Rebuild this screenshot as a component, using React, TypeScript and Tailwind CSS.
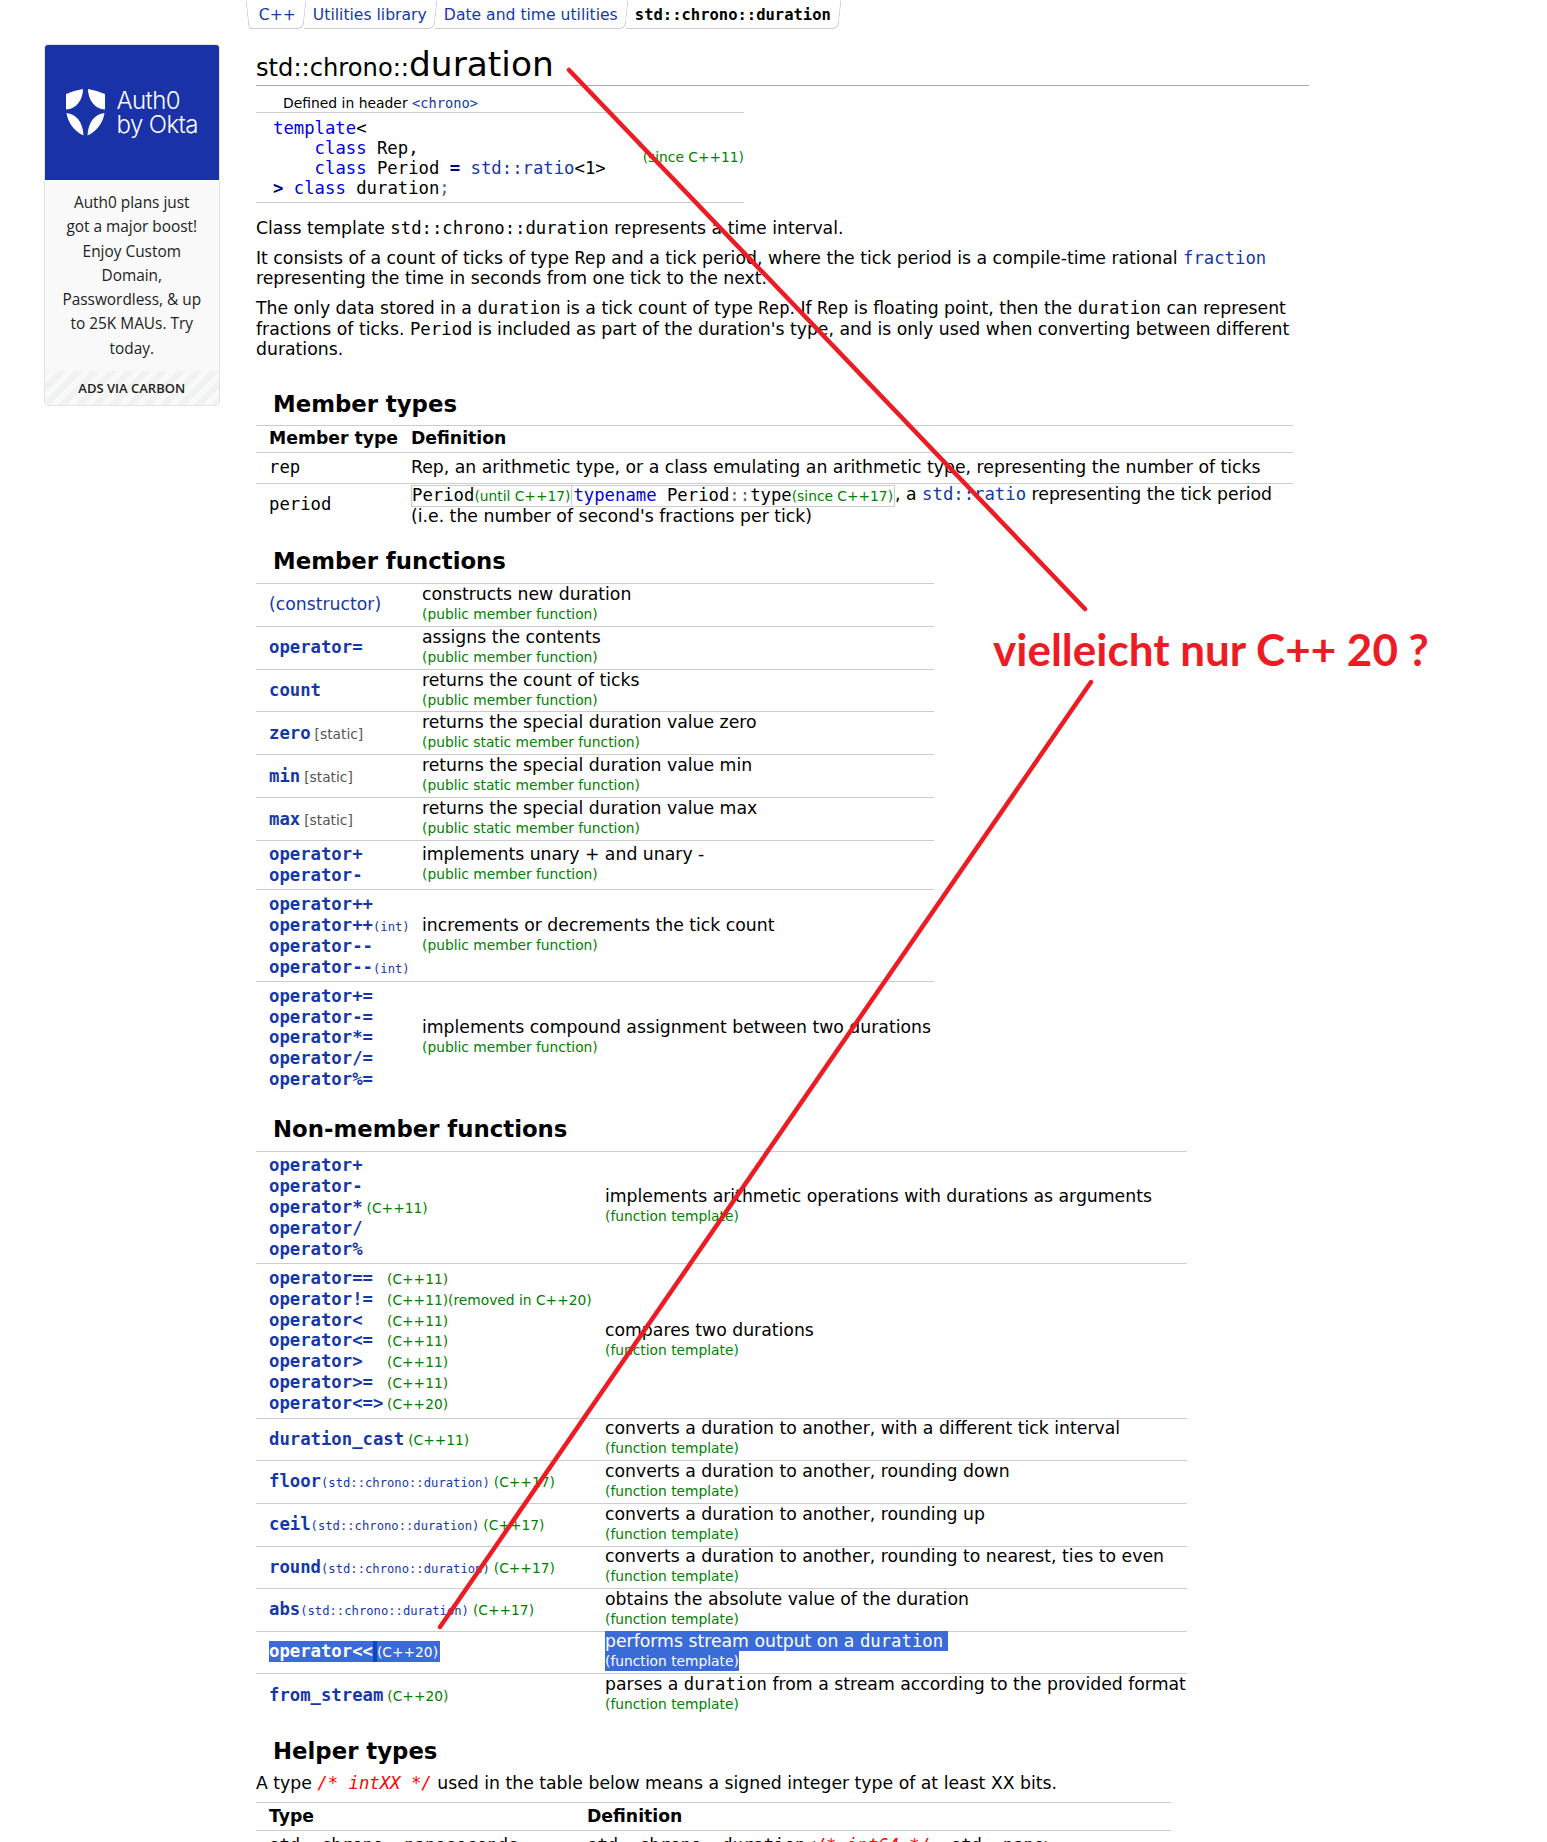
const dv = '"DejaVu Sans", sans-serif';

type Fn = { name: string; note?: string; ver?: string };

const Mono = ({ children, className = '' }: { children: React.ReactNode; className?: string }) => (
  <span className={`font-['DejaVu_Sans_Mono',monospace] ${className}`}>{children}</span>
);

const Desc = ({ text, kind }: { text: React.ReactNode; kind: string }) => (
  <div className="leading-[20px] pb-[2px]">
    <div className="text-black whitespace-nowrap">{text}</div>
    <div className="text-[13.8px] text-[#008000] leading-[20px]">({kind})</div>
  </div>
);

const FnName = ({ name, note, ver }: Fn) => (
  <div className="h-[20.9px] leading-[20.9px] whitespace-nowrap flex items-baseline">
    <Mono className="font-bold text-[#1538a8]">{name}</Mono>
    {note && <Mono className="text-[12.2px] text-[#1538a8]">{note}</Mono>}
    {ver && <span className="ml-[4px] text-[13.8px] text-[#008000]">{ver}</span>}
  </div>
);

const Row = ({ h, cols, names, desc }: { h: string; cols: string; names: React.ReactNode; desc: React.ReactNode }) => (
  <div className={`flex items-center border-b border-[#cccccc] ${h}`}>
    <div className={`${cols} pl-[13px] shrink-0`}>{names}</div>
    <div>{desc}</div>
  </div>
);

const Heading = ({ children, className = '' }: { children: React.ReactNode; className?: string }) => (
  <h3 className={`pl-[17px] text-[22.8px] font-bold text-black leading-[30px] ${className}`}>{children}</h3>
);

const memberRows: { h: string; names: Fn[]; text: string; kind: string }[] = [
  { h: 'h-[43px]', names: [{ name: 'operator=' }], text: 'assigns the contents', kind: 'public member function' },
  { h: 'h-[42.5px]', names: [{ name: 'count' }], text: 'returns the count of ticks', kind: 'public member function' },
  { h: 'h-[43px]', names: [{ name: 'zero', ver: '[static]' }], text: 'returns the special duration value zero', kind: 'public static member function' },
  { h: 'h-[43px]', names: [{ name: 'min', ver: '[static]' }], text: 'returns the special duration value min', kind: 'public static member function' },
  { h: 'h-[42.5px]', names: [{ name: 'max', ver: '[static]' }], text: 'returns the special duration value max', kind: 'public static member function' },
  { h: 'h-[49.5px]', names: [{ name: 'operator+' }, { name: 'operator-' }], text: 'implements unary + and unary -', kind: 'public member function' },
  { h: 'h-[92px]', names: [{ name: 'operator++' }, { name: 'operator++', note: '(int)' }, { name: 'operator--' }, { name: 'operator--', note: '(int)' }], text: 'increments or decrements the tick count', kind: 'public member function' },
];

const compareRows: { name: string; ver: string }[] = [
  { name: 'operator==', ver: '(C++11)' },
  { name: 'operator!=', ver: '(C++11)(removed in C++20)' },
  { name: 'operator<', ver: '(C++11)' },
  { name: 'operator<=', ver: '(C++11)' },
  { name: 'operator>', ver: '(C++11)' },
  { name: 'operator>=', ver: '(C++11)' },
  { name: 'operator<=>', ver: '(C++20)' },
];

const nonMemberRows: { fn: Fn; text: string; h: string }[] = [
  { fn: { name: 'duration_cast', ver: '(C++11)' }, text: 'converts a duration to another, with a different tick interval', h: 'h-[42px]' },
  { fn: { name: 'floor', note: '(std::chrono::duration)', ver: '(C++17)' }, text: 'converts a duration to another, rounding down', h: 'h-[43px]' },
  { fn: { name: 'ceil', note: '(std::chrono::duration)', ver: '(C++17)' }, text: 'converts a duration to another, rounding up', h: 'h-[43px]' },
  { fn: { name: 'round', note: '(std::chrono::duration)', ver: '(C++17)' }, text: 'converts a duration to another, rounding to nearest, ties to even', h: 'h-[42px]' },
  { fn: { name: 'abs', note: '(std::chrono::duration)', ver: '(C++17)' }, text: 'obtains the absolute value of the duration', h: 'h-[43px]' },
];

const Crumb = ({ children, current }: { children: React.ReactNode; current?: boolean }) => (
  <div className={`h-[29px] px-[8px] pt-[3px] flex items-center border-r border-b border-[#cccccc] rounded-br-[6px] -skew-x-6 ${current ? 'text-black font-bold' : 'text-[#1538a8]'}`}>
    <span className="skew-x-6 block">{children}</span>
  </div>
);

const AdCard = () => (
  <aside className="mt-[44px] ml-[43.5px] w-[176.5px] h-[362px] shrink-0 rounded-[4px] border border-[#e3e3e3] overflow-hidden flex flex-col bg-[#f9f9f9]">
    <div className="h-[135px] bg-[#1a32a8] flex items-center pl-[21px] gap-[12px] text-white">
      <svg width="39" height="47" viewBox="0 0 39 47" fill="white" className="shrink-0">
        <path d="M0 5 Q8 1.5 17 0 C17 10 11 20 0 20.5 Z" />
        <path d="M39 5 Q31 1.5 22 0 C22 10 28 20 39 20.5 Z" />
        <path d="M0.5 24 C10 25 17 33 17.5 46.5 C8 42 2 34 0.5 24 Z" />
        <path d="M38.5 24 C29 25 22 33 21.5 46.5 C31 42 37 34 38.5 24 Z" />
      </svg>
      <div className="font-['Inter',sans-serif] font-light text-[24px] leading-[24px] tracking-[-0.6px] whitespace-nowrap">Auth0<br />by Okta</div>
    </div>
    <div className="flex-1 px-[17px] pt-[11px] text-center font-['Open_Sans',sans-serif] text-[15.4px] leading-[24.3px] text-[#222222]">
      Auth0 plans just got a major boost! Enjoy Custom Domain, Passwordless, &amp; up to 25K MAUs. Try today.
    </div>
    <div className="h-[34px] pt-[2px] flex items-center justify-center font-['Open_Sans',sans-serif] text-[13px] font-semibold text-[#222222] bg-[repeating-linear-gradient(-45deg,#f1f2f2,#f1f2f2_6px,#f9f9f9_6px,#f9f9f9_12px)]">
      ADS VIA CARBON
    </div>
  </aside>
);

export default function App() {
  return (
    <div className="relative w-[1547px] h-[1842px] overflow-hidden bg-white flex items-start" style={{ fontFamily: dv }}>
      <AdCard />
      <main className="ml-[36px] w-[1053px] shrink-0 text-[17.27px] text-black">
        <nav className="flex -ml-[9px] h-[29px] text-[15.6px] w-fit">
          <div className="w-[4px] h-[29px] border-l border-b border-[#cccccc] rounded-bl-[6px] skew-x-6"></div>
          <Crumb>C++</Crumb>
          <Crumb>Utilities library</Crumb>
          <Crumb>Date and time utilities</Crumb>
          <Crumb current><Mono className="text-[15.5px]">std::chrono::duration</Mono></Crumb>
        </nav>

        <h1 className="mt-[12px] h-[45px] border-b border-[#aaaaaa] text-[24.2px] leading-[46px] whitespace-nowrap">
          std::chrono::<span className="text-[34.4px]">duration</span>
        </h1>

        <div className="mt-[9px] w-[488px] text-[13.9px]">
          <div className="pl-[27px] h-[17px] leading-[17px] border-b border-[#cccccc] box-content">
            Defined in header <Mono className="text-[#1538a8] text-[13.7px]">&lt;chrono&gt;</Mono>
          </div>
          <div className="relative h-[90px] border-b border-[#cccccc] flex items-center">
            <pre className="pl-[17px] font-['DejaVu_Sans_Mono',monospace] text-[17.27px] leading-[20px] text-black">
              <span className="text-[#0000dd]">template</span>&lt;{'\n'}
              {'    '}<span className="text-[#0000dd]">class</span> Rep,{'\n'}
              {'    '}<span className="text-[#0000dd]">class</span> Period <b className="text-[#000080]">=</b> <span className="text-[#1538a8]">std::ratio</span>&lt;1&gt;{'\n'}
              <b className="text-[#000080]">&gt;</b> <span className="text-[#0000dd]">class</span> duration<span className="text-[#666666]">;</span>
            </pre>
            <span className="ml-auto text-[13.8px] text-[#008000]">(since C++11)</span>
          </div>
        </div>

        <p className="mt-[15px] leading-[20.4px]">
          Class template <Mono>std::chrono::duration</Mono> represents a time interval.
        </p>
        <p className="mt-[9.5px] leading-[20.4px]">
          It consists of a count of ticks of type <Mono>Rep</Mono> and a tick period, where the tick period is a compile-time rational <Mono className="text-[#1538a8]">fraction</Mono> representing the time in seconds from one tick to the next.
        </p>
        <p className="mt-[9.5px] leading-[20.4px]">
          The only data stored in a <Mono>duration</Mono> is a tick count of type <Mono>Rep</Mono>. If <Mono>Rep</Mono> is floating point, then the <Mono>duration</Mono> can represent fractions of ticks. <Mono>Period</Mono> is included as part of the duration's type, and is only used when converting between different durations.
        </p>

        <Heading className="mt-[30px]">Member types</Heading>
        <div className="mt-[6px] w-[1037px] border-t border-[#cccccc]">
          <div className="flex h-[27px] items-center border-b border-[#cccccc] font-bold">
            <div className="w-[155px] pl-[13px]">Member type</div>
            <div>Definition</div>
          </div>
          <div className="flex h-[31px] items-center border-b border-[#cccccc]">
            <div className="w-[155px] pl-[13px]"><Mono>rep</Mono></div>
            <div>Rep, an arithmetic type, or a class emulating an arithmetic type, representing the number of ticks</div>
          </div>
          <div className="flex h-[42px] items-center">
            <div className="w-[155px] pl-[13px]"><Mono>period</Mono></div>
            <div className="leading-[19px] whitespace-nowrap">
              <span className="inline-flex border border-[#cccccc] align-top leading-[19px]">
                <span className="border-r border-[#cccccc] pr-[1px]"><Mono>Period</Mono><span className="text-[13.8px] text-[#008000]">(until C++17)</span></span>
                <span className="pl-[1px] pr-[1px]"><Mono><span className="text-[#0000dd]">typename</span> Period<span className="text-[#666666]">::</span>type</Mono><span className="text-[13.8px] text-[#008000]">(since C++17)</span></span>
              </span>
              , a <Mono className="text-[#1538a8]">std::ratio</Mono> representing the tick period<br />(i.e. the number of second's fractions per tick)
            </div>
          </div>
        </div>

        <Heading className="mt-[20px]">Member functions</Heading>
        <div className="mt-[6.5px] w-[678px] border-t border-[#cccccc]">
          <Row h="h-[43px]" cols="w-[166px]" names={<span className="text-[#1538a8]">(constructor)</span>} desc={<Desc text="constructs new duration" kind="public member function" />} />
          {memberRows.map(r => (
            <Row
              key={r.text}
              h={r.h}
              cols="w-[166px]"
              names={r.names.map((n, i) => (
                n.ver ? (
                  <div key={i} className="h-[21px] leading-[21px] flex items-baseline">
                    <Mono className="font-bold text-[#1538a8]">{n.name}</Mono>
                    <span className="ml-[4px] text-[13.8px] text-[#555555]">{n.ver}</span>
                  </div>
                ) : <FnName key={i} {...n} />
              ))}
              desc={<Desc text={r.text} kind={r.kind} />}
            />
          ))}
          <div className="flex items-center h-[111px]">
            <div className="w-[166px] pl-[13px] shrink-0">
              {['operator+=', 'operator-=', 'operator*=', 'operator/=', 'operator%='].map(n => <FnName key={n} name={n} />)}
            </div>
            <Desc text="implements compound assignment between two durations" kind="public member function" />
          </div>
        </div>

        <Heading className="mt-[20.5px]">Non-member functions</Heading>
        <div className="mt-[7px] w-[931px] border-t border-[#cccccc]">
          <Row h="h-[112px]" cols="w-[349px]"
            names={
              <>
                <FnName name="operator+" />
                <FnName name="operator-" />
                <FnName name="operator*" ver="(C++11)" />
                <FnName name="operator/" />
                <FnName name="operator%" />
              </>
            }
            desc={<Desc text="implements arithmetic operations with durations as arguments" kind="function template" />}
          />
          <Row h="h-[155px]" cols="w-[349px]"
            names={compareRows.map(r => (
              <div key={r.name} className="h-[20.9px] leading-[20.9px] flex items-baseline whitespace-nowrap">
                <Mono className="font-bold text-[#1538a8] w-[118px]">{r.name}</Mono>
                <span className="text-[13.8px] text-[#008000]">{r.ver}</span>
              </div>
            ))}
            desc={<Desc text="compares two durations" kind="function template" />}
          />
          {nonMemberRows.map(r => (
            <Row key={r.text} h={r.h} cols="w-[349px]" names={<FnName {...r.fn} />} desc={<Desc text={r.text} kind="function template" />} />
          ))}
          <Row h="h-[42px]" cols="w-[349px]"
            names={
              <span className="bg-[#3a6bd6] text-white h-[21px] inline-flex items-baseline whitespace-nowrap leading-[21px]">
                <Mono className="font-bold">operator&lt;&lt;</Mono>
                <span className="w-[4px] self-stretch bg-[#0b47c4]"></span>
                <span className="text-[13.8px]">(C++20)</span>
                <span className="w-[2px]"></span>
              </span>
            }
            desc={
              <div className="leading-[20px] pb-[2px]">
                <div className="text-white w-fit bg-[#3a6bd6] pr-[5px] whitespace-nowrap">performs stream output on a <Mono>duration</Mono></div>
                <div className="text-[13.8px] text-white w-fit bg-[#3a6bd6]">(function template)</div>
              </div>
            }
          />
          <div className="flex items-center h-[43px]">
            <div className="w-[349px] pl-[13px] shrink-0"><FnName name="from_stream" ver="(C++20)" /></div>
            <Desc text={<>parses a <Mono>duration</Mono> from a stream according to the provided format</>} kind="function template" />
          </div>
        </div>

        <Heading className="mt-[19.5px]">Helper types</Heading>
        <p className="mt-[7px] leading-[20px]">
          A type <Mono className="italic text-[#ff0000]">/* intXX */</Mono> used in the table below means a signed integer type of at least XX bits.
        </p>
        <div className="mt-[9px] w-[915px] border-t border-[#cccccc]">
          <div className="flex h-[28px] items-center border-b border-[#cccccc] font-bold">
            <div className="w-[331px] pl-[13px]">Type</div>
            <div>Definition</div>
          </div>
          <div className="flex h-[40px] pt-[2px]">
            <div className="w-[331px] pl-[13px]"><Mono>std::chrono::nanoseconds</Mono></div>
            <div><Mono>std::chrono::duration&lt;<span className="italic text-[#ff0000]">/* int64 */</span>, std::nano&gt;</Mono></div>
          </div>
        </div>
      </main>

      {/* hand drawn annotation on top of the page */}
      <svg className="absolute inset-0 pointer-events-none" width="1547" height="1842">
        <line x1="569" y1="70" x2="1085" y2="609" stroke="#ed1c24" strokeWidth="4.5" strokeLinecap="round" />
        <line x1="1091" y1="682" x2="440" y2="1627" stroke="#ed1c24" strokeWidth="4.5" strokeLinecap="round" />
      </svg>
      <div className="absolute left-[993px] top-[624px] font-['Lato',sans-serif] font-bold text-[44px] leading-[50px] text-[#ed1c24] whitespace-nowrap">
        vielleicht nur C++ 20 ?
      </div>
    </div>
  );
}
